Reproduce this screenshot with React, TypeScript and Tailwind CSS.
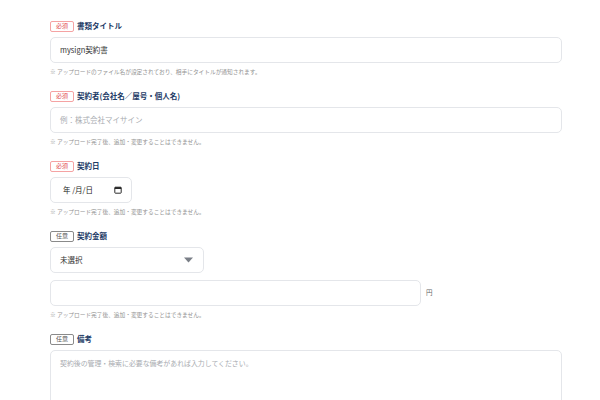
import React from 'react';

const font = { fontFamily: '"Noto Sans CJK JP", "Noto Sans", sans-serif' };

const Badge = ({ required }: { required?: boolean }) =>
  required ? (
    <span className="inline-flex items-center h-[11px] px-[5px] border border-[#f5a3a3] rounded-[2px] text-[6px] leading-none text-[#e0474c] bg-white">
      必須
    </span>
  ) : (
    <span className="inline-flex items-center h-[11px] px-[5px] border border-[#8a8a8a] rounded-[2px] text-[6px] leading-none text-[#555] bg-white">
      任意
    </span>
  );

const Label = ({ text, required }: { text: string; required?: boolean }) => (
  <div className="flex items-center gap-[3px] h-[12px] mt-[1px]">
    <Badge required={required} />
    <span className="text-[7.5px] font-bold text-[#1d3b66] leading-none">{text}</span>
  </div>
);

const Help = ({ text }: { text: string }) => (
  <p className="mt-[5px] text-[5.7px] leading-[8px] text-[#939393]">{text}</p>
);

const boxCls =
  'h-[26px] border border-[#e4e6ea] rounded-[5px] bg-white flex items-center px-[9px] text-[7.5px] text-[#333]';

const LOCKED = '※ アップロード完了後、追加・変更することはできません。';

export default function App() {
  return (
    <div className="w-[600px] h-[400px] overflow-hidden bg-white" style={font}>
      <div className="pl-[50px] pr-[38px] pt-[19px]">
        {/* 書類タイトル */}
        <div className="mb-[14px]">
          <Label text="書類タイトル" required />
          <div className={`${boxCls} mt-[5px]`}>mysign契約書</div>
          <Help text="※ アップロードのファイル名が設定されており、相手にタイトルが通知されます。" />
        </div>

        {/* 契約者 */}
        <div className="mb-[14px]">
          <Label text="契約者(会社名／屋号・個人名)" required />
          <div className={`${boxCls} mt-[5px] text-[#a8abb0]`}>例：株式会社マイサイン</div>
          <Help text={LOCKED} />
        </div>

        {/* 契約日 */}
        <div className="mb-[14px]">
          <Label text="契約日" required />
          <div className={`${boxCls} mt-[5px] w-[82px] justify-between pl-[12px] pr-[9px]`}>
            <span className="text-[7.5px] text-[#222]">年 /月/日</span>
            <svg width="8" height="8" viewBox="0 0 10 10">
              <rect x="1" y="1.5" width="8" height="7.5" rx="0.8" fill="none" stroke="#222" strokeWidth="1.2" />
              <rect x="1" y="1.5" width="8" height="2.2" fill="#222" />
            </svg>
          </div>
          <Help text={LOCKED} />
        </div>

        {/* 契約金額 */}
        <div className="mb-[14px]">
          <Label text="契約金額" />
          <div className={`${boxCls} mt-[5px] w-[154px] justify-between`}>
            <span>未選択</span>
            <svg width="9" height="6" viewBox="0 0 9 6" className="mr-[1px]">
              <path d="M0 0.5 L9 0.5 L4.5 5.5 Z" fill="#7a7f87" />
            </svg>
          </div>
          <div className="flex items-center mt-[7px] gap-[5px]">
            <div className={`${boxCls} w-[371px]`}></div>
            <span className="text-[6.5px] text-[#666]">円</span>
          </div>
          <Help text={LOCKED} />
        </div>

        {/* 備考 */}
        <div>
          <Label text="備考" />
          <div className="mt-[5px] h-[80px] border border-[#e4e6ea] rounded-[5px] bg-white px-[9px] pt-[7px] text-[6.9px] text-[#a8abb0]">
            契約後の管理・検索に必要な備考があれば入力してください。
          </div>
        </div>
      </div>
    </div>
  );
}
